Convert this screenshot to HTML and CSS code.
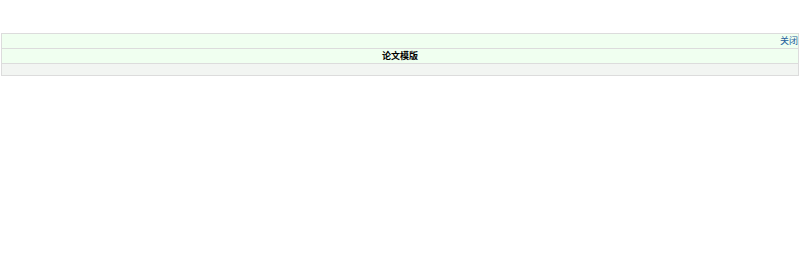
FILE: index.html
```html
<!doctype html>
<html lang="zh">
 <head>
  <meta charset="UTF-8">
  <title>论文模版</title>
  <link rel="stylesheet" href="styles.css">
 </head>
 <body>
  <div class="panel">
   <div class="row top"><a href="#" class="close">关闭</a></div>
   <div class="row title">论文模版</div>
   <div class="row foot"></div>
  </div>
 </body>
</html>
```

FILE: styles.css
```css
*{
	margin:0;
	padding:0;
}

body{
	background:#fff;
	font-family:"Liberation Sans","Noto Sans CJK SC",sans-serif;
	font-size:9px;
	color:#000;
}

.panel{
	margin:33px 1px 0 1px;
	border:1px solid #dcdcdc;
}

.row{
	height:14px;
	line-height:14px;
	background:#f0fff0;
	border-top:1px solid #dcdcdc;
}
.row:first-child{
	border-top:0;
}

.top{
	text-align:right;
}
.close{
	color:#1a5c9c;
	text-decoration:none;
}

.title{
	text-align:center;
	font-weight:bold;
}

.foot{
	height:11px;
	background:#f2f5f2;
}
```
